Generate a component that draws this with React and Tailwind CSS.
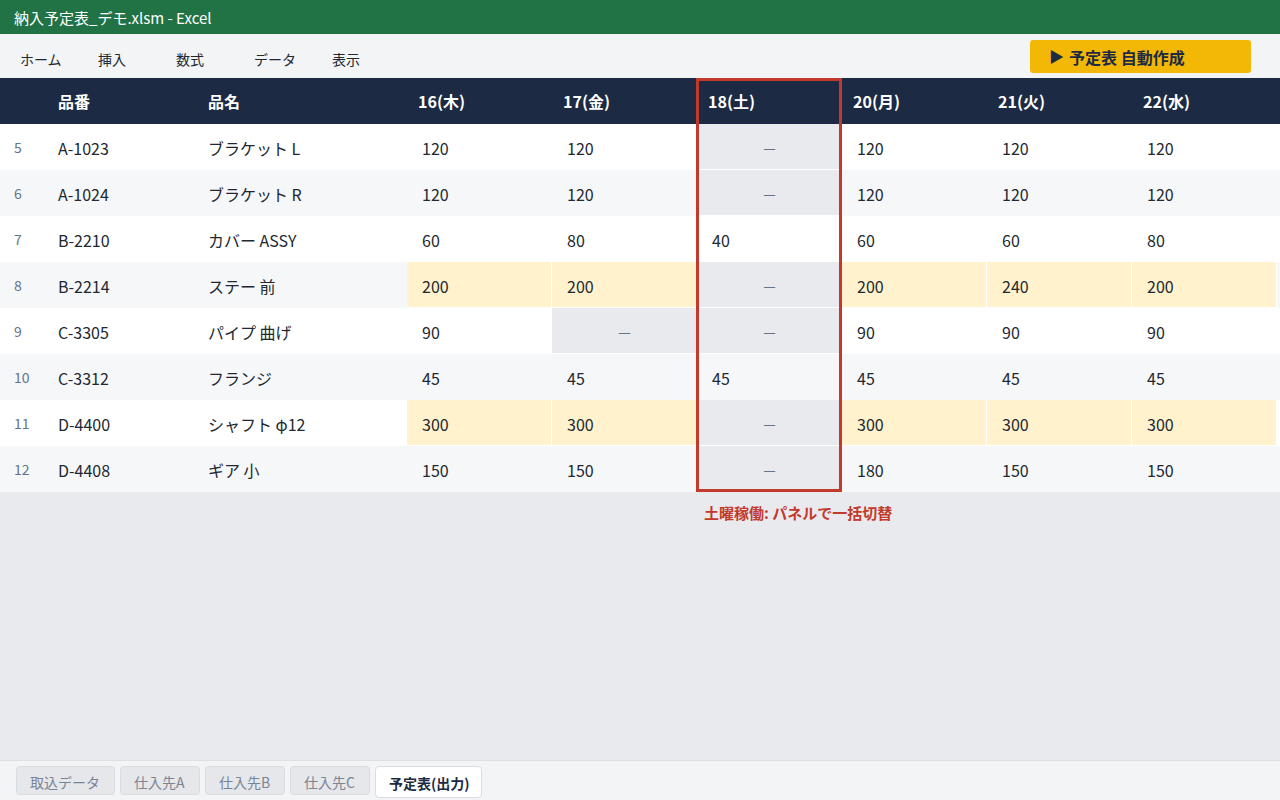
const days = ["16(木)", "17(金)", "18(土)", "20(月)", "21(火)", "22(水)"];

// null = 稼働なし (—)
const rows = [
  { no: 5, code: "A-1023", name: "ブラケット L", qty: [120, 120, null, 120, 120, 120] },
  { no: 6, code: "A-1024", name: "ブラケット R", qty: [120, 120, null, 120, 120, 120] },
  { no: 7, code: "B-2210", name: "カバー ASSY", qty: [60, 80, 40, 60, 60, 80] },
  { no: 8, code: "B-2214", name: "ステー 前", qty: [200, 200, null, 200, 240, 200], hot: true },
  { no: 9, code: "C-3305", name: "パイプ 曲げ", qty: [90, null, null, 90, 90, 90] },
  { no: 10, code: "C-3312", name: "フランジ", qty: [45, 45, 45, 45, 45, 45] },
  { no: 11, code: "D-4400", name: "シャフト φ12", qty: [300, 300, null, 300, 300, 300], hot: true },
  { no: 12, code: "D-4408", name: "ギア 小", qty: [150, 150, null, 180, 150, 150] },
];

const menus = ["ホーム", "挿入", "数式", "データ", "表示"];
const tabs = [
  { label: "取込データ", w: "w-[99px]" },
  { label: "仕入先A", w: "w-[80px]" },
  { label: "仕入先B", w: "w-[80px]" },
  { label: "仕入先C", w: "w-[80px]" },
];

const grid = "grid grid-cols-[44px_150px_213px_repeat(6,145px)]";

const QtyCell = ({ value, hot }) => {
  if (value === null) {
    return (
      <div className="flex items-center justify-center bg-[#e9eaee] shadow-[inset_-1px_-1px_0_#fff] text-[14px] text-[#64748b]">
        —
      </div>
    );
  }
  return (
    <div
      className={
        "flex items-center pl-[15px] pt-px text-[16px] text-[#222831] " +
        (hot ? "bg-[#fff2cc] shadow-[inset_-1px_-1px_0_#fff]" : "")
      }
    >
      {value}
    </div>
  );
};

const App = () => {
  return (
    <div
      className="flex flex-col h-[800px] w-[1280px] overflow-hidden bg-[#e9eaee]"
      style={{ fontFamily: '"Noto Sans CJK JP", "Noto Sans", sans-serif' }}
    >
      {/* title bar */}
      <div className="h-[34px] shrink-0 bg-[#217346] text-white text-[15px] flex items-center pl-[14px] pt-[3px]">
        納入予定表_デモ.xlsm - Excel
      </div>

      {/* ribbon */}
      <div className="h-[44px] shrink-0 bg-[#f3f4f6] flex items-start justify-between pl-[20px] pr-[29px]">
        <nav className="flex pt-[15px] text-[14px] text-[#222831]">
          {menus.map((m) => (
            <span key={m} className="w-[78px]">
              {m}
            </span>
          ))}
        </nav>
        <button className="h-[33px] w-[221px] mt-[6px] rounded-[3px] bg-[#f3b705] text-[#1c2a43] font-bold text-[16px] flex items-center pl-[19px] gap-[5px]">
          <span className="text-[15px]">▶</span>
          <span>予定表 自動作成</span>
        </button>
      </div>

      {/* sheet */}
      <div className="relative shrink-0">
        <div className={grid + " h-[46px] bg-[#1c2a43] text-white font-bold text-[16px]"}>
          <div />
          <div className="flex items-center pl-[14px]">品番</div>
          <div className="flex items-center pl-[14px]">品名</div>
          {days.map((d) => (
            <div key={d} className="flex items-center pl-[11px]">
              {d}
            </div>
          ))}
        </div>

        {rows.map((r, i) => (
          <div
            key={r.no}
            className={grid + " h-[46px] " + (i % 2 === 1 ? "bg-[#f6f7f9]" : "bg-white")}
          >
            <div className="flex items-center pl-[14px] text-[14px] text-[#64748b]">{r.no}</div>
            <div className="flex items-center pl-[14px] pt-px text-[16px] text-[#222831]">{r.code}</div>
            <div className="flex items-center pl-[14px] pt-px text-[16px] text-[#222831]">{r.name}</div>
            {r.qty.map((q, j) => (
              <QtyCell key={j} value={q} hot={r.hot && q !== null} />
            ))}
          </div>
        ))}

        {/* 土曜列の強調枠 */}
        <div className="absolute top-0 left-[696px] w-[146px] h-full border-[3px] border-[#c23a2b] pointer-events-none" />
      </div>

      <div className="flex-1 pl-[704px] pt-[8px]">
        <span className="text-[15px] font-bold text-[#c23a2b]">土曜稼働: パネルで一括切替</span>
      </div>

      {/* sheet tabs */}
      <div className="h-[40px] shrink-0 bg-[#f3f4f6] border-t border-[#dcdfe4] flex items-start gap-[5px] pl-[16px] pt-[5px]">
        {tabs.map((t) => (
          <div
            key={t.label}
            className={
              t.w +
              " h-[29px] pl-[13px] pt-[3px] flex items-center rounded-[4px] bg-[#e5e7eb] border border-[#d9dce1] text-[14px] text-[#7b8494]"
            }
          >
            {t.label}
          </div>
        ))}
        <div className="w-[107px] h-[32px] pl-[13px] pt-[3px] flex items-center rounded-[4px] bg-white border border-[#d9dce1] text-[14px] font-bold text-[#1c2a43]">
          予定表(出力)
        </div>
      </div>
    </div>
  );
};

export default App;
